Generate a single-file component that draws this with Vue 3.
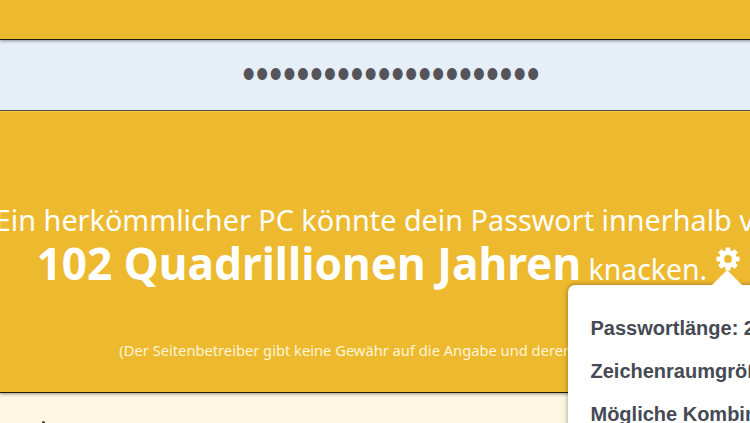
<script setup>
const dots = '●'.repeat(22)
const rows = ['Passwortlänge: 26', 'Zeichenraumgröße: 95', 'Mögliche Kombinationen: 2,6e+51']

const gearPath = (() => {
  const c = 12, R = 11.8, r = 8.6, hole = 3.9, n = 8
  const pt = (rad, a) => `${(c + rad * Math.cos(a)).toFixed(2)} ${(c + rad * Math.sin(a)).toFixed(2)}`
  let d = ''
  for (let i = 0; i < n; i++) {
    const a = (i * 2 * Math.PI) / n - Math.PI / 2
    const w = 0.27, w2 = 0.2
    d += `${i ? 'L' : 'M'}${pt(r, a - w - 0.04)} L${pt(R, a - w2)} L${pt(R, a + w2)} L${pt(r, a + w + 0.04)} `
  }
  d += `Z M${c - hole} ${c} a${hole} ${hole} 0 1 0 ${hole * 2} 0 a${hole} ${hole} 0 1 0 ${-hole * 2} 0 Z`
  return d
})()
</script>

<template>
  <div class="page">
    <div class="inner">
      <div class="top"></div>
      <div class="pw"><span class="dots">{{ dots }}</span></div>
      <section class="result">
        <p class="l1">Ein herkömmlicher PC könnte dein Passwort innerhalb von</p>
        <p class="l2">
          <strong>102 Quadrillionen Jahren</strong> knacken.
          <span class="gearwrap">
            <svg class="gear" viewBox="0 0 24 24" width="24" height="24" aria-hidden="true">
              <path fill="#fff" fill-rule="evenodd" :d="gearPath" />
            </svg>
            <div class="pop">
              <i class="arrow"></i>
              <div v-for="r in rows" :key="r" class="row">{{ r }}</div>
            </div>
          </span>
        </p>
        <p class="l3">(Der Seitenbetreiber gibt keine Gewähr auf die Angabe und deren Richtigkeit.)</p>
      </section>
      <div class="below"></div>
    </div>
  </div>
</template>

<style scoped>
.page { width: 750px; height: 423px; overflow: hidden; font-family: "Noto Sans", "Open Sans", sans-serif; background: #fdf6e3; }
.inner { width: 784px; }
.top { height: 39px; background: #edb92e; border-bottom: 1px solid #1e1a10; box-shadow: 0 1px 3px rgba(60,60,80,.55); position: relative; z-index: 1; }
.pw { height: 70px; background: #e6eef7; display: flex; justify-content: center; border-bottom: 1px solid #555; }
.dots { display: block; font-family: "DejaVu Sans", sans-serif; font-size: 13px; line-height: 16px; margin-top: 25px; letter-spacing: 2.2px; color: #54545a; height: 16px; transform: scaleY(1.2); }
.result { height: 282px; box-sizing: border-box; background: #edb92e; border-top: 1px solid #f4c53f; border-bottom: 1px solid #1e1a10; box-shadow: 0 1px 3px rgba(60,50,20,.5); display: flex; flex-direction: column; align-items: center; color: #fff; position: relative; z-index: 1; white-space: nowrap; }
.result p { margin: 0; }
.l1 { font-size: 28.8px; line-height: 36px; margin-top: 90px !important; }
.l2 { font-size: 28.4px; line-height: 52px; margin-top: -1px !important; }
.l2 strong { font-size: 44.2px; font-weight: 700; }
.gearwrap { position: relative; display: inline-block; width: 24px; height: 24px; margin-left: 2px; margin-right: 7px; }
.gear { position: absolute; left: 0; top: -9px; }
.l3 { font-size: 14.7px; line-height: 20px; margin: 45px 8px 0 0 !important; color: #fff5d8; }
.pop { position: absolute; left: -148px; top: 29px; width: 300px; height: 200px; background: #fff; border-radius: 7px; box-shadow: 0 0 5px rgba(0,0,0,.4); padding: 22px 22px; box-sizing: border-box; z-index: 2; font-family: "Liberation Sans", Arial, sans-serif; }
.arrow { position: absolute; left: 144px; top: -15px; width: 0; height: 0; border: 15px solid transparent; border-top: 0; border-bottom-color: #fff; }
.row { font-size: 20px; font-weight: 700; line-height: 43px; color: #454a54; text-align: left; }
.below { width: 3px; height: 3px; margin: 28px 0 0 42px; background: #4a4030; border-radius: 50% 50% 0 0; }
</style>
